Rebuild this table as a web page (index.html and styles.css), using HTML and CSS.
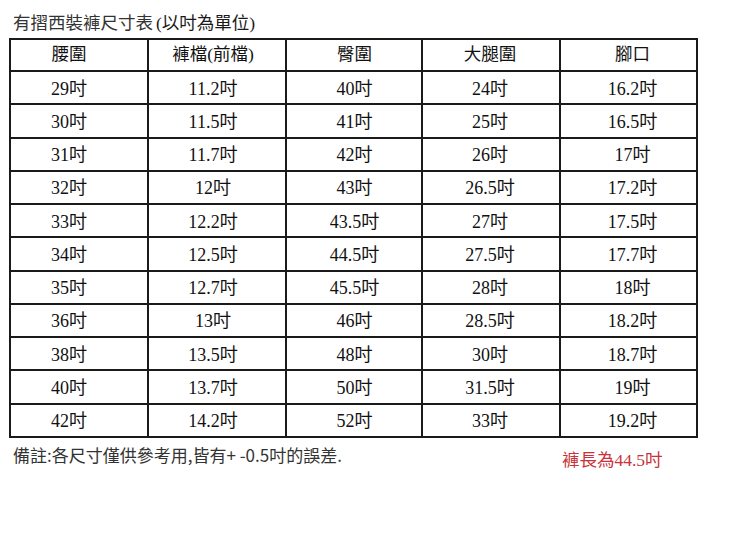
FILE: index.html
```html
<!DOCTYPE html>
<html lang="zh-Hant">
<head>
<meta charset="utf-8">
<title>有摺西裝褲尺寸表</title>
<link rel="stylesheet" href="styles.css">
</head>
<body>
<div class="page">
  <h1 class="title"><span class="title-main">有摺西裝褲尺寸表</span><span class="title-unit">(以吋為單位)</span></h1>
  <table class="size-table">
    <thead>
      <tr><th class="c1">腰圍</th><th class="c2">褲檔(前檔)</th><th class="c3">臀圍</th><th class="c4">大腿圍</th><th class="c5">腳口</th></tr>
    </thead>
    <tbody>
      <tr><td class="c1">29吋</td><td class="c2">11.2吋</td><td class="c3">40吋</td><td class="c4">24吋</td><td class="c5">16.2吋</td></tr>
      <tr><td class="c1">30吋</td><td class="c2">11.5吋</td><td class="c3">41吋</td><td class="c4">25吋</td><td class="c5">16.5吋</td></tr>
      <tr><td class="c1">31吋</td><td class="c2">11.7吋</td><td class="c3">42吋</td><td class="c4">26吋</td><td class="c5">17吋</td></tr>
      <tr><td class="c1">32吋</td><td class="c2">12吋</td><td class="c3">43吋</td><td class="c4">26.5吋</td><td class="c5">17.2吋</td></tr>
      <tr><td class="c1">33吋</td><td class="c2">12.2吋</td><td class="c3">43.5吋</td><td class="c4">27吋</td><td class="c5">17.5吋</td></tr>
      <tr><td class="c1">34吋</td><td class="c2">12.5吋</td><td class="c3">44.5吋</td><td class="c4">27.5吋</td><td class="c5">17.7吋</td></tr>
      <tr><td class="c1">35吋</td><td class="c2">12.7吋</td><td class="c3">45.5吋</td><td class="c4">28吋</td><td class="c5">18吋</td></tr>
      <tr><td class="c1">36吋</td><td class="c2">13吋</td><td class="c3">46吋</td><td class="c4">28.5吋</td><td class="c5">18.2吋</td></tr>
      <tr><td class="c1">38吋</td><td class="c2">13.5吋</td><td class="c3">48吋</td><td class="c4">30吋</td><td class="c5">18.7吋</td></tr>
      <tr><td class="c1">40吋</td><td class="c2">13.7吋</td><td class="c3">50吋</td><td class="c4">31.5吋</td><td class="c5">19吋</td></tr>
      <tr><td class="c1">42吋</td><td class="c2">14.2吋</td><td class="c3">52吋</td><td class="c4">33吋</td><td class="c5">19.2吋</td></tr>
    </tbody>
  </table>
  <div class="footer">
    <p class="note">備註:各尺寸僅供參考用,皆有+ -0.5吋的誤差.</p>
    <p class="length">褲長為44.5吋</p>
  </div>
</div>
</body>
</html>
```
FILE: styles.css
```css
html, body {
  margin: 0;
  padding: 0;
  background: #ffffff;
}

.page {
  width: 750px;
  height: 542px;
  overflow: hidden;
}

.title {
  margin: 0 0 6px 0;
  padding: 12px 0 0 13px;
  height: 20px;
  line-height: 20px;
  font-size: 17.5px;
  font-weight: normal;
  color: #333333;
  white-space: nowrap;
}

.title-main {
  font-family: "Noto Sans CJK TC", sans-serif;
}

.title-unit {
  font-family: "Liberation Serif", "Noto Sans CJK TC", serif;
  font-weight: normal;
  color: #1a1a1a;
  margin-left: 3px;
}

.size-table {
  display: grid;
  grid-template-columns: 138px 138px 136px 138px 137px;
  grid-template-rows: 32px repeat(11, 33.27px);
  margin-left: 9px;
  width: max-content;
  border-top: 2px solid #1a1a1a;
  border-left: 2px solid #1a1a1a;
  border-collapse: separate;
  border-spacing: 0;
}

.size-table thead,
.size-table tbody,
.size-table tr {
  display: contents;
}

.size-table th,
.size-table td {
  box-sizing: border-box;
  display: flex;
  align-items: center;
  justify-content: center;
  padding: 0;
  border-right: 2px solid #1a1a1a;
  border-bottom: 2px solid #1a1a1a;
  font-family: "Liberation Serif", "Noto Sans CJK TC", serif;
  font-size: 18px;
  font-weight: normal;
  color: #111111;
  line-height: 1;
  white-space: nowrap;
}

.size-table td {
  padding-top: 2px;
}

.size-table th {
  font-size: 17.5px;
}

.size-table .c1 { padding-right: 20px; }
.size-table .c2 { padding-right: 8px; }
.size-table .c3 { padding-left: 1px; }
.size-table .c4 { padding-right: 2px; }
.size-table .c5 { padding-left: 8px; }

.footer {
  display: flex;
  align-items: flex-start;
  margin-top: 7px;
}

.note {
  margin: 0;
  width: 562px;
  padding-left: 13px;
  box-sizing: border-box;
  line-height: 20px;
  font-family: "Noto Sans CJK TC", sans-serif;
  font-size: 17px;
  color: #333333;
  white-space: nowrap;
}

.length {
  margin: 5px 0 0 0;
  line-height: 20px;
  font-family: "Liberation Serif", "Noto Sans CJK TC", serif;
  font-size: 17.5px;
  font-weight: normal;
  color: #c8323a;
  white-space: nowrap;
}
```
